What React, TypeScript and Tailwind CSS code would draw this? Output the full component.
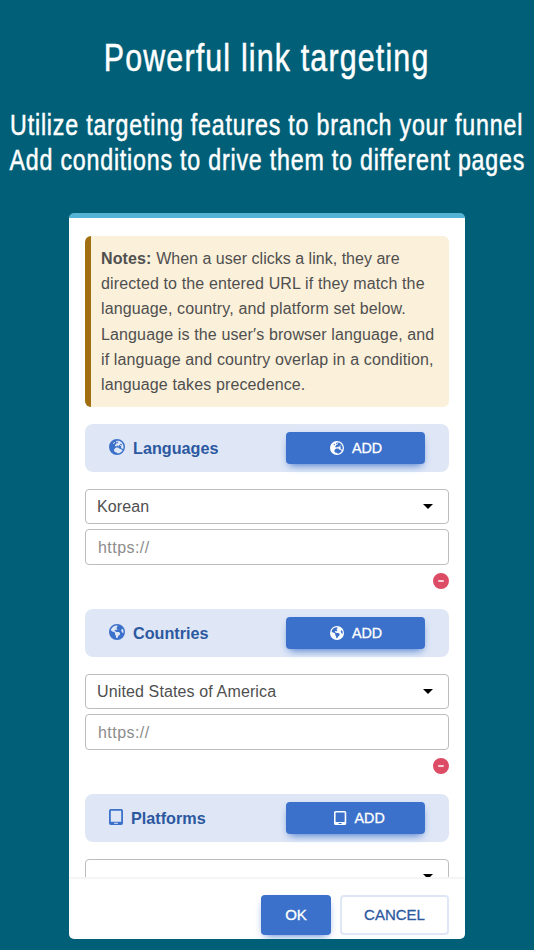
import { useState } from 'react';
import type { ComponentType } from 'react';
import { FaCircleMinus, FaEarthAmericas, FaEarthEurope } from 'react-icons/fa6';

type Section = {
  title: string;
  icon: ComponentType<{ className?: string }>;
  buttonClass: string;
  options: string[];
};

function TabletIcon({ className }: { className?: string }) {
  return (
    <svg viewBox="0 0 14 16" fill="currentColor" fillRule="evenodd" className={className}>
      <path d="M1.8 0h10.4A1.8 1.8 0 0 1 14 1.8v12.4a1.8 1.8 0 0 1-1.8 1.8H1.8A1.8 1.8 0 0 1 0 14.2V1.8A1.8 1.8 0 0 1 1.8 0zm0 1.8v10.9h10.4V1.8zM5.5 13.8a.5.5 0 0 0 0 1h3a.5.5 0 0 0 0-1z" />
    </svg>
  );
}

const sections: Section[] = [
  { title: 'Languages', icon: FaEarthEurope, buttonClass: 'pl-px', options: ['Korean'] },
  { title: 'Countries', icon: FaEarthAmericas, buttonClass: 'pl-px', options: ['United States of America'] },
  { title: 'Platforms', icon: TabletIcon, buttonClass: 'pl-2', options: [''] },
];

function TargetSection({ title, icon: Icon, buttonClass, options }: Section) {
  const [value, setValue] = useState(options[0]);
  const [url, setUrl] = useState('');

  return (
    <section className="mb-5">
      <div className="flex h-12 items-center justify-between rounded-lg bg-[#dfe7f6] px-6">
        <h2 className="flex items-center text-[16.2px] font-bold text-[#2c58a0]">
          <Icon className="mr-2 h-4 w-auto -translate-y-px text-[#3b71ca]" />
          {title}
        </h2>
        <button
          type="button"
          className={`${buttonClass} flex h-8 w-[139px] items-center justify-center rounded bg-[#3b71ca] text-[14.3px] text-white shadow-[0_4px_9px_-3px_#3b71ca]`}
        >
          <Icon className="mr-2 h-3.5 w-auto" />
          <span className="translate-y-px [-webkit-text-stroke:0.3px]">ADD</span>
        </button>
      </div>

      <div className="relative mt-[17px]">
        <select
          value={value}
          onChange={(e) => setValue(e.target.value)}
          className="block h-[35px] w-full appearance-none rounded border border-[#bdbdbd] bg-white px-[11px] text-base tracking-[0.13px] text-[#4f4f4f] outline-none"
        >
          {options.map((o) => (
            <option key={o}>{o}</option>
          ))}
        </select>
        <svg className="pointer-events-none absolute right-4 top-[15px] h-[5px] w-[10px]" viewBox="0 0 10 5">
          <path d="M0 0h10L5 5z" fill="#000" />
        </svg>
      </div>
      <input
        value={url}
        onChange={(e) => setUrl(e.target.value)}
        placeholder="https://"
        className="mt-[5px] block h-9 w-full rounded border border-[#bdbdbd] px-3 pt-0.5 text-base tracking-[0.45px] text-[#4f4f4f] outline-none placeholder:text-[#8c8c8c]"
      />
      <div className="mt-2 flex justify-end">
        <button type="button">
          <FaCircleMinus className="size-4 text-[#dc4c64]" />
        </button>
      </div>
    </section>
  );
}

export default function App() {
  return (
    <div className="flex h-[950px] w-[534px] flex-col items-center overflow-hidden bg-[#015f78] font-['Liberation_Sans',sans-serif]">
      <header className="flex flex-col items-center whitespace-nowrap text-white [-webkit-text-stroke:0.5px]">
        <h1 className="mt-[34px] scale-x-[0.8] text-[38px] leading-[48px] tracking-[1.45px]">Powerful link targeting</h1>
        <p className="mt-[26px] scale-x-[0.8] text-[29px] leading-[34.5px] tracking-[1px]">
          Utilize targeting features to branch your funnel
        </p>
        <p className="scale-x-[0.8] text-[29px] leading-[34.5px] tracking-[1px]">
          Add conditions to drive them to different pages
        </p>
      </header>

      <div className="mt-9 flex h-[726px] w-[396px] flex-col overflow-hidden rounded-[5px] border-t-[5px] border-[#54b4d3] bg-white">
        <div className="min-h-0 flex-1 overflow-hidden px-4 pt-[18px]">
          <p className="mb-[17px] h-[171px] whitespace-nowrap rounded-md border-l-[6px] border-[#a16f11] bg-[#fbf0da] px-2.5 py-2.5 text-base leading-[25.2px] tracking-[0.13px] text-[#4f4f4f]">
            <strong>Notes:</strong> <span className="tracking-[0.02px]">When a user clicks a link, they are</span>
            <br />
            directed to the entered URL if they match the
            <br />
            language, country, and platform set below.
            <br />
            Language is the user′s browser language, and
            <br />
            if language and country overlap in a condition,
            <br />
            language takes precedence.
          </p>
          {sections.map((s) => (
            <TargetSection key={s.title} {...s} />
          ))}
        </div>

        <footer className="flex h-[62px] shrink-0 justify-end gap-[9px] border-t-2 border-[#f5f5f5] px-4 pt-4">
          <button
            type="button"
            className="h-10 w-[70px] rounded bg-[#3b71ca] pt-px text-[15px] text-white shadow-[0_4px_9px_-4px_#3b71ca] [-webkit-text-stroke:0.3px]"
          >
            OK
          </button>
          <button
            type="button"
            className="h-10 w-[109px] rounded border-2 border-[#dfe7f6] pt-px text-[15px] text-[#2c58a0] [-webkit-text-stroke:0.3px]"
          >
            CANCEL
          </button>
        </footer>
      </div>
    </div>
  );
}
